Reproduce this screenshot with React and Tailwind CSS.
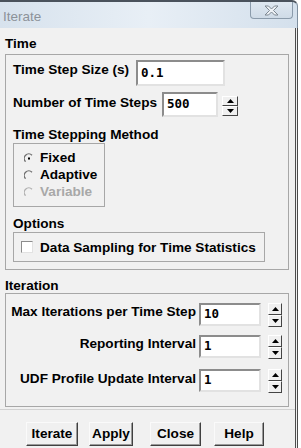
const sans = "font-['Liberation_Sans',Arial,sans-serif]";
const mono = "font-['DejaVu_Sans_Mono',monospace]";

function Input({ value, className }) {
  return (
    <div
      className={`bg-white border-2 border-t-[#8c8c8c] border-l-[#8c8c8c] border-r-[#e2e2e2] border-b-[#e2e2e2] flex items-center pl-[3px] ${mono} font-bold text-[12.5px] text-black ${className}`}
    >
      {value}
    </div>
  );
}

function SpinBtn({ up }) {
  return (
    <div className="flex-1 bg-[#f0f0f0] border border-t-white border-l-white border-r-[#444] border-b-[#444] flex items-center justify-center">
      <svg width="7" height="4" viewBox="0 0 7 4">
        {up ? <path d="M0 4 L3.5 0 L7 4 Z" fill="#000" /> : <path d="M0 0 L3.5 4 L7 0 Z" fill="#000" />}
      </svg>
    </div>
  );
}

function Spinner({ className }) {
  return (
    <div className={`flex flex-col ${className}`}>
      <SpinBtn up />
      <SpinBtn />
    </div>
  );
}

function Radio({ checked, label, disabled }) {
  return (
    <div className="h-[17px] flex items-center">
      <svg width="10" height="11" viewBox="0 0 10 11" className="ml-[10px]">
        <path d="M8 2.2 A4.5 4.5 0 0 0 1.6 8.6" fill="none" stroke={disabled ? '#b0b0b0' : '#6e6e6e'} strokeWidth="1.3" />
        {checked && <rect x="4" y="4.5" width="2" height="2" fill="#000" />}
      </svg>
      <span className={`ml-[6px] ${disabled ? 'text-[#a8a8a8]' : 'text-black'}`}>{label}</span>
    </div>
  );
}

function Button({ children, className }) {
  return (
    <div
      className={`h-[24px] flex items-center justify-center bg-[#f0f0f0] border border-t-[#fafafa] border-l-[#fafafa] border-r-[#404040] border-b-[#404040] shadow-[inset_-1px_-1px_0_#9a9a9a] ${className}`}
    >
      {children}
    </div>
  );
}

export default function App() {
  return (
    <div className={`w-[301px] h-[448px] bg-white flex ${sans} text-[13.6px] font-bold text-black`}>
      <div className="w-[298px] h-full flex flex-col">
        {/* Title bar */}
        <div className="h-[28px] flex items-start border-t-2 border-[#4a525c] rounded-tr-[6px] bg-gradient-to-r from-[#d7e2ed] via-[#e8eff6] to-[#d4e0ec] border-r border-r-[#7f8f9f]">
          <span className="mt-[7px] ml-[3px] font-normal text-[13.5px] leading-[15px] text-[#8c9299]">Iterate</span>
          <div className="ml-auto mr-[4px] w-[43px] h-[17px] rounded-b-[4px] border border-t-0 border-[#8b9bab] bg-gradient-to-b from-[#dfe8f1] to-[#cfdbe7] flex items-center justify-center">
            <svg width="15" height="11" viewBox="0 0 15 11">
              <path
                d="M1 1 H4.5 L7.5 4 L10.5 1 H14 L9.5 5.5 L14 10 H10.5 L7.5 7 L4.5 10 H1 L5.5 5.5 Z"
                fill="#eef2f6"
                stroke="#7d8791"
                strokeWidth="1"
                strokeLinejoin="round"
              />
            </svg>
          </div>
        </div>

        {/* Body */}
        <div className="flex-1 bg-[#f1f1f1] border-r-[3px] border-double border-[#4d4d4d] flex flex-col">
          <div className="mt-[8px] ml-[5px] h-[15px] leading-[15px]">Time</div>
          <div className="mt-[3px] ml-[5px] w-[284px] border border-[#a7a7a7] pb-[7px] flex flex-col">
            <div className="mt-[5px] flex items-start h-[26px]">
              <span className="pl-[7px] w-[130px] pt-[2px] leading-[15px] whitespace-nowrap">Time Step Size (s)</span>
              <Input value="0.1" className="w-[89px] h-[26px]" />
            </div>
            <div className="mt-[6px] flex items-start h-[25px]">
              <span className="pl-[7px] w-[156px] pt-[3px] leading-[15px] whitespace-nowrap">Number of Time Steps</span>
              <Input value="500" className="w-[56px] h-[25px]" />
              <Spinner className="ml-[4px] mt-[4px] w-[16px] h-[20px]" />
            </div>
            <div className="mt-[10px] ml-[7px] h-[15px] leading-[15px]">Time Stepping Method</div>
            <div className="mt-[1px] ml-[7px] w-[92px] h-[64px] border border-[#a7a7a7] pt-[6px] flex flex-col">
              <Radio checked label="Fixed" />
              <Radio label="Adaptive" />
              <Radio disabled label="Variable" />
            </div>
            <div className="mt-[9px] ml-[7px] h-[15px] leading-[15px]">Options</div>
            <div className="mt-[1px] ml-[7px] w-[252px] h-[30px] border border-[#a7a7a7] flex items-center">
              <div className="ml-[7px] w-[12px] h-[12px] bg-white border border-t-[#8c8c8c] border-l-[#8c8c8c] border-r-[#e2e2e2] border-b-[#e2e2e2]" />
              <span className="ml-[7px] mt-[2px] whitespace-nowrap">Data Sampling for Time Statistics</span>
            </div>
          </div>

          <div className="mt-[8px] ml-[5px] h-[15px] leading-[15px]">Iteration</div>
          <div className="ml-[5px] w-[284px] border border-[#a7a7a7] pt-[9px] pb-[14px] flex flex-col">
            <div className="flex items-start h-[23px]">
              <span className="w-[190px] text-right pt-[1px] leading-[15px] whitespace-nowrap">Max Iterations per Time Step</span>
              <Input value="10" className="ml-[3px] w-[62px] h-[23px]" />
              <Spinner className="ml-[7px] w-[14px] h-[24px]" />
            </div>
            <div className="mt-[9px] flex items-start h-[23px]">
              <span className="w-[190px] text-right pt-[1px] leading-[15px]">Reporting Interval</span>
              <Input value="1" className="ml-[3px] w-[62px] h-[23px]" />
              <Spinner className="ml-[7px] w-[14px] h-[24px]" />
            </div>
            <div className="mt-[11px] flex items-start h-[23px]">
              <span className="w-[190px] text-right pt-[2px] leading-[15px] whitespace-nowrap">UDF Profile Update Interval</span>
              <Input value="1" className="ml-[3px] w-[62px] h-[23px]" />
              <Spinner className="ml-[7px] w-[14px] h-[24px]" />
            </div>
          </div>
          <div className="mt-[2px] h-px bg-[#d2d2d2]" />

          <div className="mt-[12px] flex">
            <Button className="ml-[26px] w-[52px]">Iterate</Button>
            <Button className="ml-[11px] w-[44px]">Apply</Button>
            <Button className="ml-[17px] w-[51px]">Close</Button>
            <Button className="ml-[13px] w-[50px]">Help</Button>
          </div>
        </div>
      </div>
    </div>
  );
}
